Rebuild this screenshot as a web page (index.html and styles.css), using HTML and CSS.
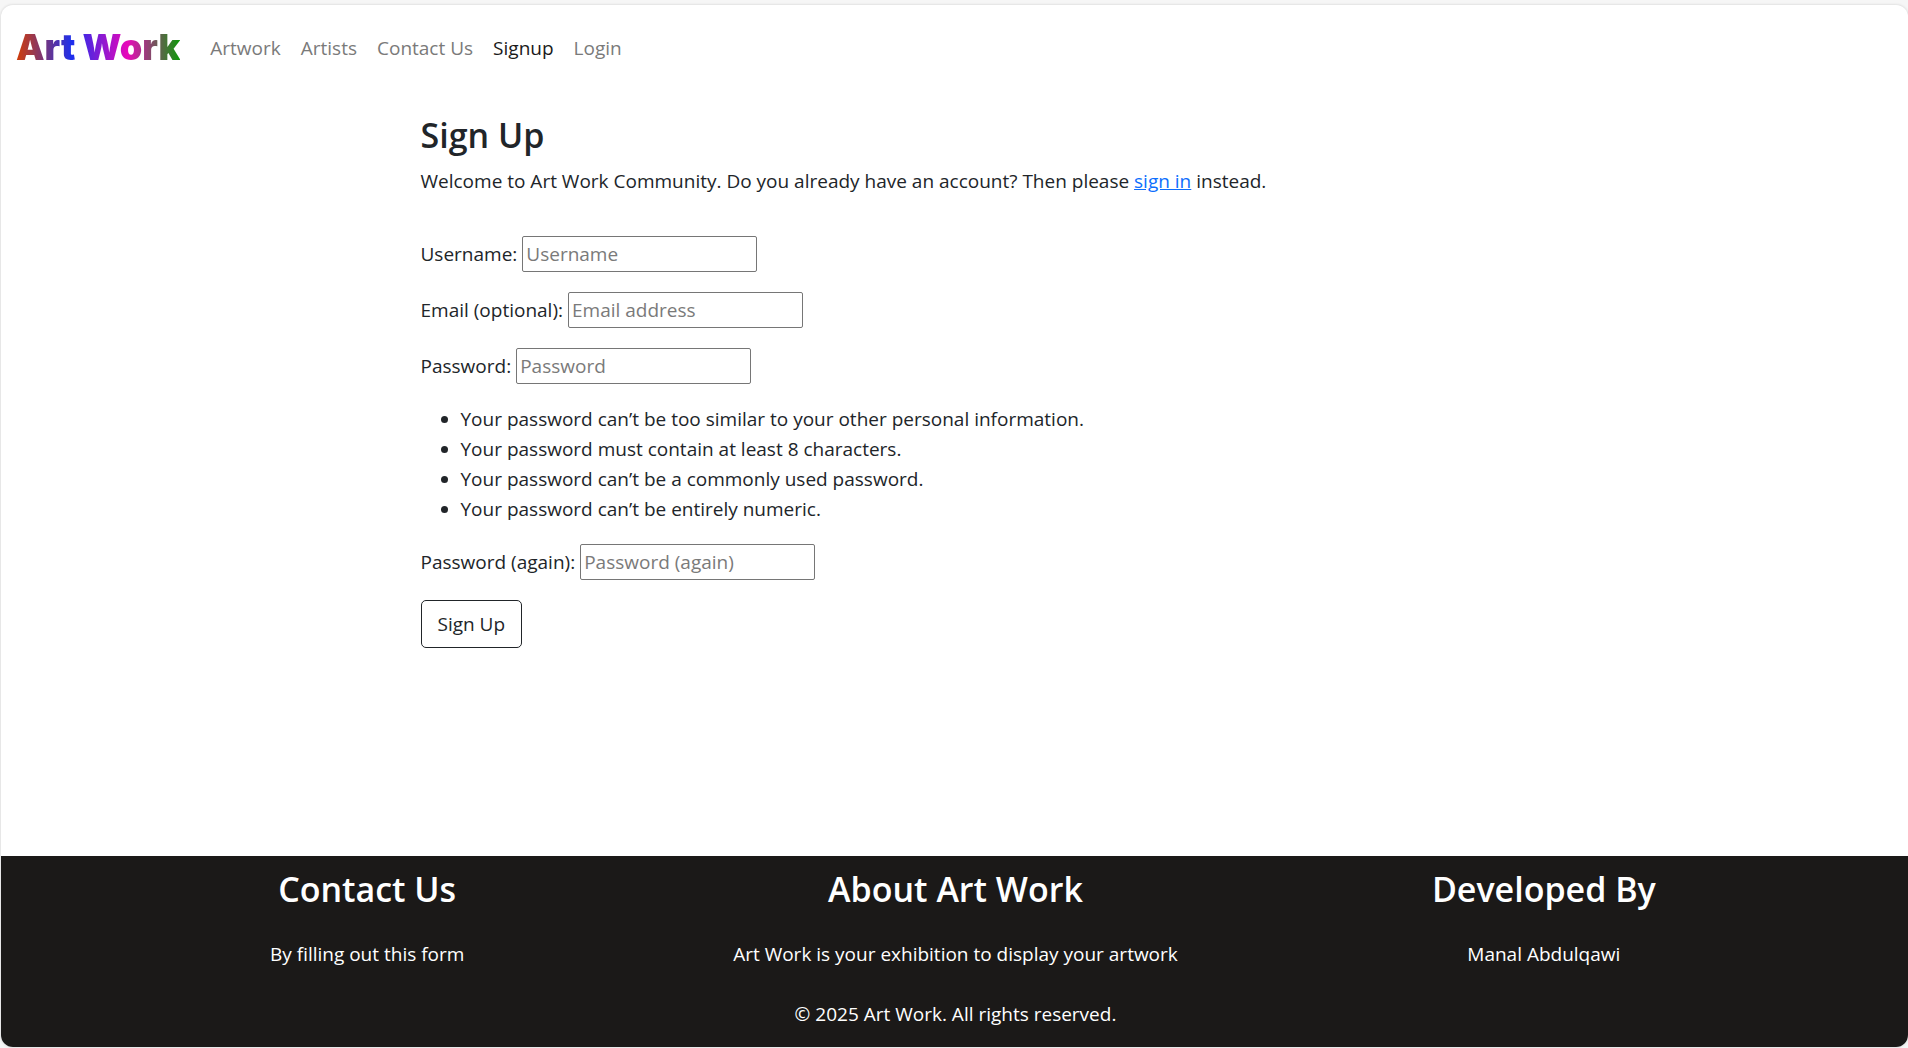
FILE: index.html
```html
<!DOCTYPE html>
<html lang="en">
<head>
<meta charset="utf-8">
<meta name="viewport" content="width=device-width, initial-scale=1">
<title>Art Work - Sign Up</title>
<link rel="stylesheet" href="styles.css">
</head>
<body>
<div class="page">
  <header class="navbar">
    <a class="brand" href="#">Art Work</a>
    <nav class="nav-links" aria-label="Main">
      <a href="#">Artwork</a>
      <a href="#">Artists</a>
      <a href="#">Contact Us</a>
      <a class="active" href="#" aria-current="page">Signup</a>
      <a href="#">Login</a>
    </nav>
  </header>

  <main class="content">
    <h1>Sign Up</h1>
    <p class="intro">Welcome to Art Work Community. Do you already have an account? Then please <a href="#">sign in</a> instead.</p>
    <form class="signup" action="#" method="post">
      <div class="field">
        <label for="username">Username:</label>
        <input type="text" id="username" placeholder="Username">
      </div>
      <div class="field">
        <label for="email">Email (optional):</label>
        <input type="email" id="email" placeholder="Email address">
      </div>
      <div class="field">
        <label for="password1">Password:</label>
        <input type="password" id="password1" placeholder="Password">
      </div>
      <ul class="rules">
        <li>Your password can’t be too similar to your other personal information.</li>
        <li>Your password must contain at least 8 characters.</li>
        <li>Your password can’t be a commonly used password.</li>
        <li>Your password can’t be entirely numeric.</li>
      </ul>
      <div class="field">
        <label for="password2">Password (again):</label>
        <input type="password" id="password2" placeholder="Password (again)">
      </div>
      <button class="submit" type="submit">Sign Up</button>
    </form>
  </main>

  <footer class="footer">
    <div class="columns">
      <section>
        <h2>Contact Us</h2>
        <p>By filling out this form</p>
      </section>
      <section>
        <h2>About Art Work</h2>
        <p>Art Work is your exhibition to display your artwork</p>
      </section>
      <section>
        <h2>Developed By</h2>
        <p>Manal Abdulqawi</p>
      </section>
    </div>
    <p class="copyright">© 2025 Art Work. All rights reserved.</p>
  </footer>
</div>
</body>
</html>
```
FILE: styles.css
```css
* {
  box-sizing: border-box;
}

body {
  margin: 0;
  padding: 5px 0 1px 1px;
  background: #f6f6f6;
  color: #212529;
  font: 19px/30px "Open Sans", "Noto Sans", sans-serif;
}

h1,
h2,
p,
ul {
  margin: 0;
}

h1,
h2 {
  font-size: 34px;
  font-weight: 600;
  line-height: 48px;
}

.page {
  display: flex;
  flex-direction: column;
  min-height: calc(100vh - 6px);
  border-radius: 12px;
  overflow: hidden;
  background: #fff;
  box-shadow: 0 0 2px 1px #e2e2e2;
}

.navbar {
  display: flex;
  align-items: center;
  gap: 30px;
  padding: 12px 15px;
}

.brand {
  font-family: Inter, sans-serif;
  font-size: 36px;
  font-weight: 900;
  line-height: 60px;
  text-decoration: none;
  color: transparent;
  background: linear-gradient(to right, #d33c05, #1c2fee 34%, #e808ba 68%, #0c9a08);
  background-clip: text;
  -webkit-background-clip: text;
}

.nav-links {
  display: flex;
  gap: 20px;
  padding-top: 2px;
}

.nav-links a {
  color: #7a7a7a;
  text-decoration: none;
}

.nav-links .active {
  color: #1a1a1a;
}

.content {
  width: 100%;
  max-width: 1098px;
  margin: 0 auto;
  padding: 22px 15px 0;
}

.intro {
  margin: 7px 0 40px;
}

.intro a {
  color: #0d6efd;
}

.signup {
  display: flex;
  flex-direction: column;
  align-items: flex-start;
  gap: 20px;
}

.field {
  display: flex;
  align-items: center;
  gap: 5px;
}

.field input {
  width: 235px;
  height: 36px;
  padding: 1px 3px;
  border: 1px solid #767676;
  border-radius: 2px;
  background: #fff;
  color: inherit;
  font: inherit;
}

.field input::placeholder {
  color: #7a7a7a;
}

.rules {
  padding-left: 40px;
}

.submit {
  padding: 8px 16px;
  border: 1px solid #212529;
  border-radius: 5px;
  background: #fff;
  color: #212529;
  font: inherit;
}

.footer {
  margin-top: auto;
  padding: 9px 70px 18px 72px;
  background: #1b1918;
  color: #fff;
  text-align: center;
}

.columns {
  display: grid;
  grid-template-columns: repeat(3, 1fr);
}

.columns p {
  margin: 26px 0 30px;
}
```
